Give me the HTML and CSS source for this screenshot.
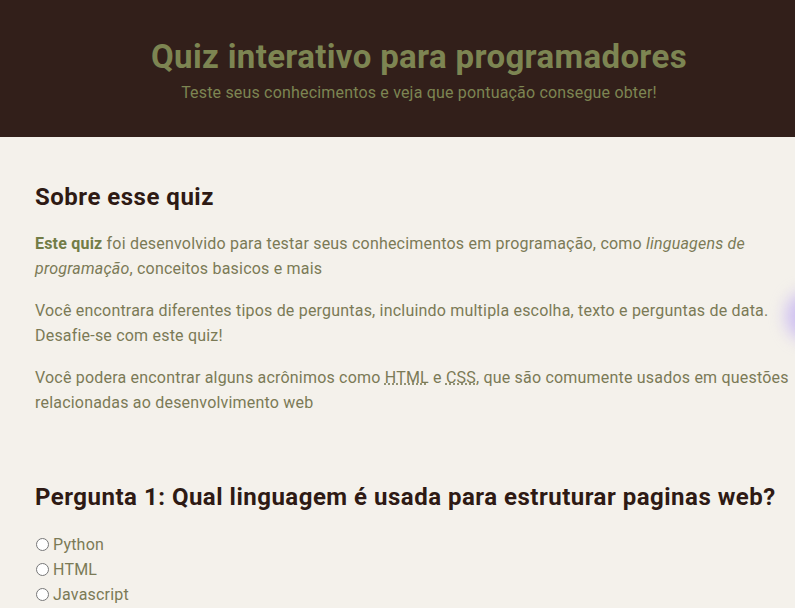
FILE: index.html
```html
<!DOCTYPE html>
<html lang="pt-BR">
<head>
<meta charset="utf-8">
<title>Quiz interativo para programadores</title>
<link rel="stylesheet" href="styles.css">
</head>
<body>
<div class="page">
  <header class="hero">
    <h1 class="hero-title">Quiz interativo para programadores</h1>
    <p class="hero-sub">Teste seus conhecimentos e veja que pontuação consegue obter!</p>
  </header>
  <main class="content">
    <section class="about">
      <h2 class="section-title">Sobre esse quiz</h2>
      <p class="text"><strong class="accent">Este quiz</strong> foi desenvolvido para testar seus conhecimentos em programação, como <em>linguagens de programação</em>, conceitos basicos e mais</p>
      <p class="text">Você encontrara diferentes tipos de perguntas, incluindo multipla escolha, texto e perguntas de data. Desafie-se com este quiz!</p>
      <p class="text">Você podera encontrar alguns acrônimos como <abbr title="HyperText Markup Language">HTML</abbr> e <abbr title="Cascading Style Sheets">CSS</abbr>, que são comumente usados em questões relacionadas ao desenvolvimento web</p>
    </section>
    <section class="question">
      <h2 class="section-title">Pergunta 1: Qual linguagem é usada para estruturar paginas web?</h2>
      <div class="options">
        <label class="option"><input type="radio" name="q1" class="radio"> Python</label>
        <label class="option"><input type="radio" name="q1" class="radio"> HTML</label>
        <label class="option"><input type="radio" name="q1" class="radio"> Javascript</label>
      </div>
    </section>
  </main>
  <div class="glow"></div>
</div>
</body>
</html>
```
FILE: styles.css
```css
html, body {
  margin: 0;
  padding: 0;
}
body {
  background: #f4f1eb;
  font-family: Roboto, "Noto Sans", sans-serif;
  color: #7b7a56;
  overflow: hidden;
}
.page {
  width: 838px;
  position: relative;
}
.hero {
  background: #321f1a;
  height: 137px;
  box-sizing: border-box;
  padding-top: 36px;
  text-align: center;
}
.hero-title {
  margin: 0;
  font-size: 33px;
  line-height: 41px;
  font-weight: 700;
  letter-spacing: 0.35px;
  color: #7d8552;
}
.hero-sub {
  margin: 5px 0 0;
  font-size: 16px;
  line-height: 22px;
  letter-spacing: 0.18px;
  color: #7d8552;
}
.content {
  padding: 44px 35px 0;
}
.section-title {
  margin: 0 0 18px;
  font-size: 24px;
  line-height: 32px;
  font-weight: 700;
  letter-spacing: 0.5px;
  color: #2e1a14;
}
.text {
  margin: 0 0 17px;
  font-size: 16px;
  line-height: 25px;
  letter-spacing: 0.2px;
}
.accent {
  color: #727c46;
}
abbr {
  text-decoration: underline dotted;
}
.question {
  margin-top: 66px;
}
.question .section-title {
  margin-bottom: 19px;
}
.options {
  display: flex;
  flex-direction: column;
}
.option {
  display: flex;
  align-items: center;
  font-size: 16px;
  line-height: 25px;
  letter-spacing: 0.2px;
}
.radio {
  margin: 0 4px 0 1px;
  width: 13px;
  height: 13px;
}
.glow {
  position: absolute;
  left: 786px;
  top: 292px;
  width: 40px;
  height: 48px;
  border-radius: 50%;
  background: rgba(190, 170, 245, 0.7);
  filter: blur(8px);
}
```
